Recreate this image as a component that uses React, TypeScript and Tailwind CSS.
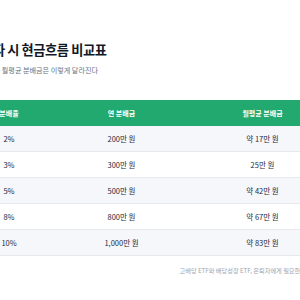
import React from "react";

const rows = [
  { rate: "2%", year: "200만 원", month: "약 17만 원" },
  { rate: "3%", year: "300만 원", month: "25만 원" },
  { rate: "5%", year: "500만 원", month: "약 42만 원" },
  { rate: "8%", year: "800만 원", month: "약 67만 원" },
  { rate: "10%", year: "1,000만 원", month: "약 83만 원" },
];

export default function App() {
  return (
    <div
      className="flex justify-center bg-white min-h-[300px] overflow-hidden"
      style={{ fontFamily: '"Noto Sans CJK KR", "Noto Sans", sans-serif' }}
    >
      <div className="w-[381px] shrink-0 pt-[41px]">
        <h1 className="text-[13.2px] leading-[18px] font-bold text-[#111827] tracking-[-0.03em]">
          1억 투자 시 현금흐름 비교표
        </h1>
        <p className="mt-[6px] text-[7.1px] leading-[10px] text-[#6b7280]">
          분배율에 따라 월평균 분배금은 이렇게 달라진다
        </p>
        <div className="mt-[25px]">
          <div className="grid grid-cols-[99px_126px_156px] h-[26px] items-center bg-[#21a96f] text-white text-[7px] font-bold text-center rounded-t-[3px]">
            <div>분배율</div>
            <div>연 분배금</div>
            <div>월평균 분배금</div>
          </div>
          {rows.map((r, i) => (
            <div
              key={r.rate}
              className={
                "grid grid-cols-[99px_126px_156px] h-[26px] items-center text-[7.5px] text-[#1f2937] text-center border-b border-[#e8e9ee] " +
                (i % 2 === 0 ? "bg-[#f6f7fb]" : "bg-white")
              }
            >
              <div>{r.rate}</div>
              <div>{r.year}</div>
              <div>{r.month}</div>
            </div>
          ))}
        </div>
        <p className="mt-[11px] pl-[220px] whitespace-nowrap text-[6.2px] leading-[8px] text-[#9ca3af]">
          고배당 ETF와 배당성장 ETF, 은퇴자에게 필요한 것은?
        </p>
      </div>
    </div>
  );
}
